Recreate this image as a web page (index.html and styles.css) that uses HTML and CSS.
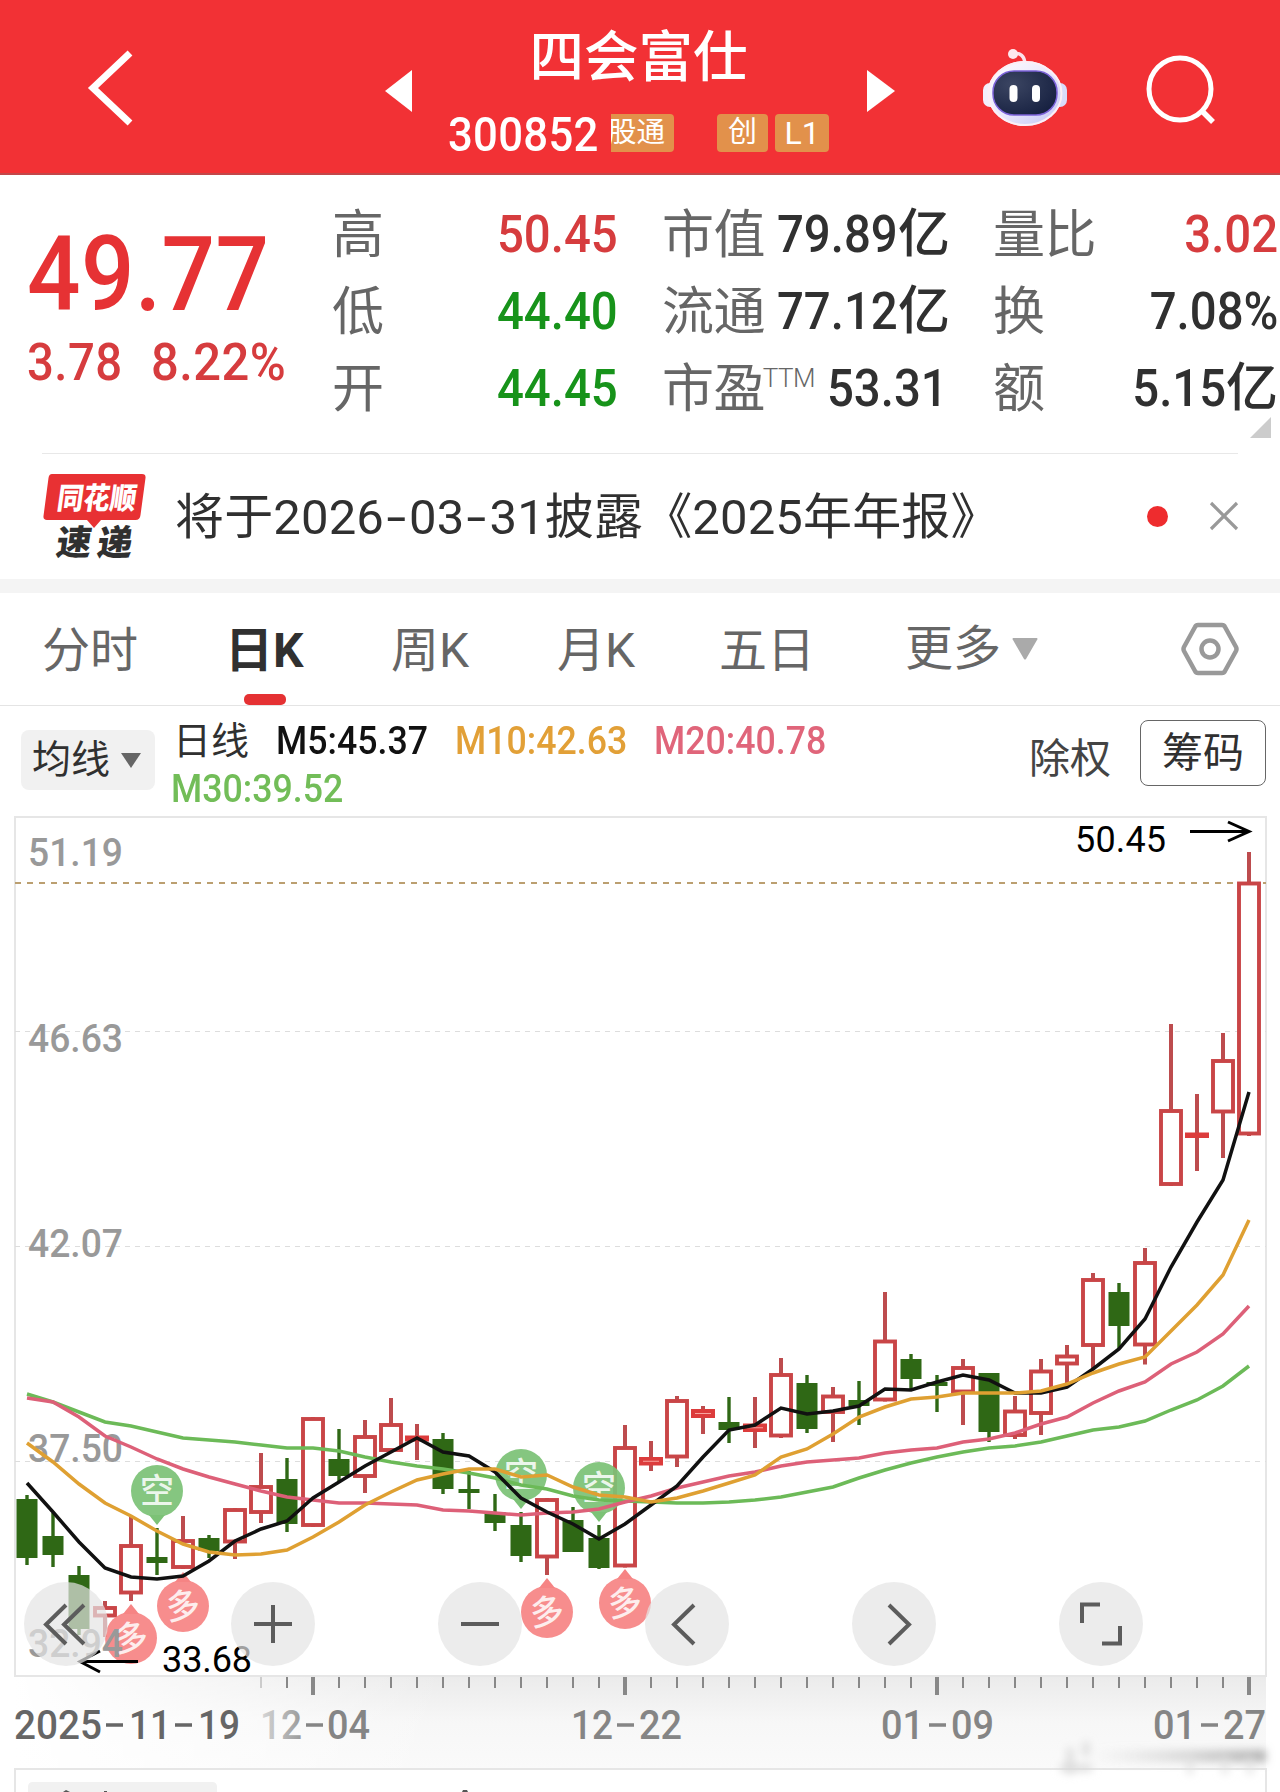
FILE: index.html
```html
<!DOCTYPE html>
<html lang="zh-CN">
<head>
<meta charset="utf-8">
<title>四会富仕 300852</title>
<link rel="stylesheet" href="styles.css">
</head>
<body>
<header class="topbar">
  <svg class="back" width="52" height="84" viewBox="0 0 52 84"><path d="M45 7 8 42l37 35" fill="none" stroke="#fff" stroke-width="7"/></svg>
  <svg class="prev" width="28" height="42" viewBox="0 0 28 42"><path d="M27 0v42L0 21z" fill="#fff"/></svg>
  <div class="stock">
    <h1>四会富仕</h1>
    <div class="code-row">
      <span class="code">300852</span>
      <span class="tag tag-cut"><b>股通</b></span>
      <span class="tag tag-c">创</span>
      <span class="tag tag-l">L1</span>
    </div>
  </div>
  <svg class="next" width="28" height="42" viewBox="0 0 28 42"><path d="M0 0v42l28-21z" fill="#fff"/></svg>
  <svg class="robot" width="86" height="80" viewBox="0 0 86 80">
    <defs>
      <linearGradient id="shell" x1="0" y1="0" x2="1" y2="1"><stop offset="0" stop-color="#fff"/><stop offset=".5" stop-color="#ece8fc"/><stop offset="1" stop-color="#bfc4f4"/></linearGradient>
      <radialGradient id="visor" cx=".3" cy=".3" r=".8"><stop offset="0" stop-color="#3b4562"/><stop offset="1" stop-color="#172141"/></radialGradient>
    </defs>
    <path d="M31 6c7-2 12 2 12 11" fill="none" stroke="#fbe3ec" stroke-width="3.5"/>
    <circle cx="31" cy="6" r="5" fill="#fde9ee"/>
    <rect x="1" y="35" width="18" height="24" rx="7" fill="#f3effc"/>
    <rect x="67" y="35" width="18" height="24" rx="7" fill="#d9dcfb"/>
    <ellipse cx="43" cy="45.500" rx="37.500" ry="32.500" fill="url(#shell)"/>
    <ellipse cx="43" cy="45.500" rx="36.500" ry="31.500" fill="none" stroke="#fceff6" stroke-width="2"/>
    <rect x="11" y="23" width="64" height="44" rx="21" fill="url(#visor)" stroke="#7b62d8" stroke-width="1.500"/>
    <rect x="27.500" y="37" width="8" height="17" rx="4" fill="#fff"/>
    <rect x="50" y="37" width="8" height="17" rx="4" fill="#fff"/>
  </svg>
  <svg class="search" width="74" height="74" viewBox="0 0 74 74"><circle cx="35" cy="36" r="31" fill="none" stroke="#fff" stroke-width="5"/><path d="m56 57 12 12" stroke="#fff" stroke-width="5.500"/></svg>
</header>

<section class="quote">
  <div class="last">
    <div class="price">49.77</div>
    <div class="change"><span>3.78</span><span>8.22%</span></div>
  </div>
  <dl class="stats s1">
    <div><dt>高</dt><dd class="up"><span class="n">50.45</span></dd></div>
    <div><dt>低</dt><dd class="down"><span class="n">44.40</span></dd></div>
    <div><dt>开</dt><dd class="down"><span class="n">44.45</span></dd></div>
  </dl>
  <dl class="stats s2">
    <div><dt>市值</dt><dd><span class="n">79.89</span>亿</dd></div>
    <div><dt>流通</dt><dd><span class="n">77.12</span>亿</dd></div>
    <div><dt>市盈<sup>TTM</sup></dt><dd class="pe"><span class="n">53.31</span></dd></div>
  </dl>
  <dl class="stats s3">
    <div><dt>量比</dt><dd class="up"><span class="n">3.02</span></dd></div>
    <div><dt>换</dt><dd><span class="n">7.08%</span></dd></div>
    <div><dt>额</dt><dd><span class="n">5.15</span>亿</dd></div>
  </dl>
  <i class="corner"></i>
</section>

<section class="news">
  <svg class="news-logo" width="106" height="88" viewBox="0 0 106 88">
    <path d="M10 3h90q4 0 3.500 4l-5 37q-.5 5-5 5H59l-7 8-7-8H5q-4 0-3.500-4l5-38q.5-4 3.500-4z" fill="#e83133"/>
    <text class="logo-a" transform="translate(14 37.500) skewX(-8)" textLength="79" lengthAdjust="spacingAndGlyphs">同花顺</text>
    <text class="logo-b" transform="translate(13 84) skewX(-8)"><tspan x="0">速</tspan><tspan x="41">递</tspan></text>
  </svg>
  <p>将于2026<i class="dash">-</i>03<i class="dash">-</i>31披露《2025年年报》</p>
  <i class="dot"></i>
  <svg class="close" width="30" height="30" viewBox="0 0 30 30"><path d="M2 2l26 26M28 2 2 28" stroke="#999" stroke-width="3.200"/></svg>
</section>

<nav class="tabs">
  <span class="t1">分时</span>
  <span class="t2 active">日K</span>
  <span class="t3">周K</span>
  <span class="t4">月K</span>
  <span class="t5">五日</span>
  <span class="t6">更多<svg width="26" height="22" viewBox="0 0 26 22"><path d="M1 0h24q1 1 0 2L14 21q-1 1-2 0L1 2Q0 1 1 0z" fill="#aaa"/></svg></span>
  <svg class="gear" width="58" height="54" viewBox="0 0 58 54"><path d="M17 3h24q2 0 3 2l11 20q1 2 0 4L44 49q-1 2-3 2H17q-2 0-3-2L3 29q-1-2 0-4L14 5q1-2 3-2z" fill="none" stroke="#999" stroke-width="4.500"/><circle cx="29" cy="27" r="8.500" fill="none" stroke="#999" stroke-width="4.500"/></svg>
</nav>

<section class="legend">
  <div class="ma-btn">均线<svg width="20" height="15" viewBox="0 0 20 15"><path d="M0 0h20L10 15z" fill="#666"/></svg></div>
  <div class="ma">
    <span class="name">日线</span><span class="m5">M5:45.37</span><span class="m10">M10:42.63</span><span class="m20">M20:40.78</span>
    <span class="m30">M30:39.52</span>
  </div>
  <span class="adjust">除权</span>
  <span class="chips">筹码</span>
</section>

<main class="chart">
  <svg id="kline" width="1280" height="986" viewBox="0 806 1280 986">
    <defs>
      <linearGradient id="axisV" x1="0" y1="0" x2="0" y2="1"><stop offset="0" stop-color="#ebebeb"/><stop offset=".5" stop-color="#f7f7f7"/><stop offset="1" stop-color="#fafafa"/></linearGradient>
      <linearGradient id="fadeL" x1="0" y1="0" x2="1" y2="0"><stop offset="0" stop-color="#fff"/><stop offset="1" stop-color="#fff" stop-opacity="0"/></linearGradient>
      <linearGradient id="dateFade" gradientUnits="userSpaceOnUse" x1="262" y1="0" x2="312" y2="0"><stop offset="0" stop-color="#d4d4d4"/><stop offset="1" stop-color="#8c8c8c"/></linearGradient>
      <linearGradient id="smear" x1="0" y1="0" x2="1" y2="0"><stop offset="0" stop-color="#bbb" stop-opacity="0"/><stop offset="1" stop-color="#999" stop-opacity=".75"/></linearGradient>
      <filter id="soft" x="-20%" y="-60%" width="140%" height="220%"><feGaussianBlur stdDeviation="4"/></filter>
    </defs>
    <rect x="15" y="1677" width="1251" height="92" fill="url(#axisV)"/>
    <rect x="15" y="1677" width="430" height="92" fill="url(#fadeL)"/>
    <g class="frame">
      <rect x="15" y="817" width="1251" height="859"/>
      <path d="M15 1792V1769H1266V1792"/>
    </g>
    <g class="grid"><path d="M15 1031.500H1266M15 1246.500H1266M15 1461.500H1266"/></g>
    <path class="last-line" d="M15 883H1266"/>
    <g id="candles"></g>
    <g id="markers"></g>
    <g class="ylab">
      <text x="28" y="866" textLength="95" lengthAdjust="spacingAndGlyphs">51.19</text>
      <text x="28" y="1052" textLength="95" lengthAdjust="spacingAndGlyphs">46.63</text>
      <text x="28" y="1257" textLength="95" lengthAdjust="spacingAndGlyphs">42.07</text>
      <text x="28" y="1462" textLength="95" lengthAdjust="spacingAndGlyphs">37.50</text>
      <text x="28" y="1657" textLength="95" lengthAdjust="spacingAndGlyphs">32.94</text>
    </g>
    <g id="lines"></g>
    <g class="extreme">
      <text x="1075" y="852" textLength="91">50.45</text>
      <path d="M1190 831.500h58M1228 822l21 9.500-21 9.500"/>
      <text x="162" y="1672" textLength="90">33.68</text>
      <path d="M138 1661.500H81M100 1651l-20 10.500 20 10.500"/>
    </g>
    <g id="ticks"></g>
    <g class="xlab">
      <text class="first" x="14" y="1739" textLength="88" lengthAdjust="spacingAndGlyphs">2025</text><path class="first" d="M106 1725h17M175 1725h17"/><text class="first" x="129" y="1739" textLength="42" lengthAdjust="spacingAndGlyphs">11</text><text class="first" x="198" y="1739" textLength="42" lengthAdjust="spacingAndGlyphs">19</text>
      <text x="260" y="1739" textLength="42" lengthAdjust="spacingAndGlyphs" fill="url(#dateFade)">12</text><path d="M306 1725h17"/><text x="327" y="1739" textLength="43" lengthAdjust="spacingAndGlyphs">04</text>
      <text x="571" y="1739" textLength="42" lengthAdjust="spacingAndGlyphs">12</text><path d="M617 1725h17"/><text x="639" y="1739" textLength="43" lengthAdjust="spacingAndGlyphs">22</text>
      <text x="881" y="1739" textLength="43" lengthAdjust="spacingAndGlyphs">01</text><path d="M929 1725h17"/><text x="951" y="1739" textLength="43" lengthAdjust="spacingAndGlyphs">09</text>
      <text x="1153" y="1739" textLength="43" lengthAdjust="spacingAndGlyphs">01</text><path d="M1201 1725h17"/><text x="1223" y="1739" textLength="43" lengthAdjust="spacingAndGlyphs">27</text>
    </g>
    <g filter="url(#soft)">
      <rect x="1090" y="1750" width="176" height="12" fill="url(#smear)"/>
      <path d="M1060 1768h32M1070 1774V1748M1086 1742v14" stroke="#d8d8d8" stroke-width="6" fill="none"/>
      <path d="M1190 1758v16M1225 1758v16M1250 1758v16" stroke="#e2e2e2" stroke-width="6" fill="none"/>
    </g>
    <path d="M28 1792v-5q0-5 5-5H212q5 0 5 5v5z" fill="#f1f1f1"/>
    <path d="M63 1792l3-2 4 2zM104 1792v-1h3v1zM462 1792l1-2h4l1 2z" fill="#555"/>
  </svg>
  <div class="controls">
    <button><svg viewBox="0 0 84 84"><path d="M42 23 22 42.500 42 62M60 23 40 42.500 60 62"/></svg></button>
    <button><svg viewBox="0 0 84 84"><path d="M42 23v38M23 42h38"/></svg></button>
    <button><svg viewBox="0 0 84 84"><path d="M23 42h38"/></svg></button>
    <button><svg viewBox="0 0 84 84"><path d="M49 23 29 42.500 49 62"/></svg></button>
    <button><svg viewBox="0 0 84 84"><path d="M37 23 57 42.500 37 62"/></svg></button>
    <button><svg viewBox="0 0 84 84"><path d="M23 41V22.500h18M61 44v17.500H43"/></svg></button>
  </div>
</main>
<script src="chart.js"></script>
</body>
</html>
```
FILE: styles.css
```css
* { box-sizing: border-box; }
body {
  margin: 0;
  width: 1280px;
  height: 1792px;
  overflow: hidden;
  background: #fff;
  color: #303030;
  font-family: Roboto, "Noto Sans CJK SC", sans-serif;
}
i { font-style: normal; }
svg { display: block; flex: none; }

.topbar {
  height: 175px;
  background: #f23135;
  border-bottom: 2px solid #c2474a;
  display: flex;
  align-items: flex-start;
  color: #fff;
}
.back { margin: 46px 0 0 85px; }
.prev { margin: 70px 0 0 248px; }
.stock { width: 454px; display: flex; flex-direction: column; }
.stock h1 {
  margin: 15px 3px 0 0;
  text-align: center;
  font: 500 54.5px/76px "Noto Sans CJK SC", sans-serif;
}
.code-row { display: flex; align-items: center; height: 38px; margin: 23px 0 0 35px; }
.code { width: 163px; padding-top: 3px; font-size: 48px; font-weight: 500; line-height: 38px; letter-spacing: .3px; white-space: nowrap; transform: scaleX(.91); transform-origin: left; }
.tag {
  height: 38px;
  border-radius: 4px;
  background: #e2914b;
  font-size: 29px;
  line-height: 37px;
  text-align: center;
  flex: none;
}
.tag-cut { width: 63px; overflow: hidden; display: flex; justify-content: flex-end; padding-right: 9px; border-radius: 0 4px 4px 0; font-size: 28.5px; white-space: nowrap; }
.tag-cut b { font-weight: 400; flex: none; }
.tag-c { width: 51px; margin-left: 43px; }
.tag-l { width: 54px; margin-left: 7px; font-size: 32px; line-height: 38px; }
.next { margin: 70px 0 0 0; }
.robot { margin: 48px 0 0 87px; }
.search { margin: 53px 0 0 77px; }

.quote { height: 278px; display: flex; position: relative; }
.last { width: 332px; padding-left: 27px; color: #e63234; font-weight: 500; }
.price { font-size: 104px; line-height: 104px; letter-spacing: .5px; margin-top: 48px; transform: scaleX(.905); transform-origin: left; }
.change { display: flex; font-size: 52px; line-height: 60px; margin-top: 6px; color: #d63c3e; }
.change span { width: 124px; transform: scaleX(.91); transform-origin: left; white-space: nowrap; letter-spacing: .5px; }
.change span + span { transform: scaleX(.94); }
.stats { margin: 19px 0 0; }
.stats > div { display: flex; justify-content: space-between; height: 77px; line-height: 75px; white-space: nowrap; }
.stats dt { font-size: 52px; font-weight: 400; line-height: 74px; color: #666; font-family: "Noto Sans CJK SC", sans-serif; letter-spacing: -.6px; }
.stats dd { margin: 3px 0 0; font-size: 52px; font-weight: 500; }
.stats .n { display: inline-block; transform: scaleX(.91); transform-origin: right; }
.stats dd.up { color: #d63c3e; }
.stats dd.down { color: #17931a; }
.stats sup { font: 300 26px/1 Roboto, sans-serif; vertical-align: 20px; margin-left: -2px; letter-spacing: -.5px; }
.stats .pe { padding-right: 2px; margin-left: -20px; }
.s1 { width: 286px; }
.s2 { width: 288px; margin-left: 44px; }
.s3 { width: 286px; margin-left: 43px; }
.s3 dd { padding-right: 1px; }
.corner { position: absolute; right: 9px; bottom: 15px; border-left: 21px solid transparent; border-bottom: 21px solid #ccc; }

.news {
  height: 140px;
  display: flex;
  align-items: center;
  position: relative;
  border-bottom: 14px solid #f4f4f4;
  background: linear-gradient(#e8e8e8, #e8e8e8) 42px 0 / 1196px 1px no-repeat;
}
.news-logo { margin: 0 0 2px 42px; }
.logo-a { font: 900 30px "Noto Sans CJK SC", sans-serif; fill: #fff; }
.logo-b { font: 900 35px "Noto Sans CJK SC", sans-serif; fill: #303030; }
.news p { margin: 4px 0 0 27px; width: 972px; font-size: 49px; line-height: 122px; letter-spacing: .15px; white-space: nowrap; }
.dash { display: inline-block; width: 25px; text-align: center; transform: scaleX(1.45); }
.dot { width: 21px; height: 21px; border-radius: 50%; background: #ee2c2e; }
.close { margin-left: 41px; }

.tabs { height: 113px; border-bottom: 1px solid #e4e4e4; display: flex; align-items: center; font-size: 48px; font-weight: 400; color: #666; white-space: nowrap; }
.tabs > span { height: 112px; line-height: 116px; flex: none; }
.t1 { margin-left: 42px; width: 183px; }
.t2 { width: 166px; }
.t3 { width: 166px; }
.t4 { width: 162px; }
.t5 { width: 186px; }
.t6 { width: 276px; display: flex; align-items: center; gap: 11px; }
.active { position: relative; color: #303030; font-weight: 700; }
.active::after { content: ""; position: absolute; left: 19px; bottom: 0; width: 42px; height: 11px; border-radius: 5px; background: #e53133; }

.legend { height: 100px; display: flex; align-items: flex-start; }
.ma-btn { margin: 24px 0 0 21px; width: 134px; height: 60px; border-radius: 8px; background: #f1f1f1; display: flex; align-items: center; gap: 11px; padding-left: 11px; font-size: 39px; line-height: 64px; }
.ma { margin: 11px 0 0 17px; width: 857px; height: 92px; font-size: 39px; font-weight: 500; line-height: 48px; display: flex; flex-wrap: wrap; align-content: flex-start; }
.ma span { white-space: nowrap; transform: scaleX(.915); transform-origin: left; }
.ma span.name { width: 104px; font-size: 38px; font-weight: 400; padding-left: 1px; line-height: 48px; transform: none; }
.m5 { width: 179px; color: #111; }
.m10 { width: 199px; color: #e2a037; }
.m20 { width: 350px; color: #e0657a; }
.m30 { color: #72bd58; margin-left: -1px; }
.adjust { margin-top: 22px; width: 111px; font-size: 41px; line-height: 62px; color: #444; }
.chips { margin-top: 14px; width: 126px; height: 66px; border: 1.5px solid #666; border-radius: 8px; text-align: center; font-size: 41px; line-height: 64px; }

.chart { position: relative; }
.frame { fill: none; stroke: #e6e6e6; stroke-width: 2; }
.grid { stroke: #ddd; stroke-width: 1.2; stroke-dasharray: 5 5; }
.last-line { stroke: #bb9f70; stroke-width: 1.8; stroke-dasharray: 6 6; }
.ylab { font-size: 39.5px; font-weight: 500; fill: #999; }
.extreme { font-size: 36px; fill: #000; }
.extreme path { fill: none; stroke: #000; stroke-width: 3; }
.xlab { font-size: 41px; font-weight: 500; fill: #858585; }
.xlab path { stroke: #858585; stroke-width: 3.5; }
.xlab text.first { fill: #666; }
.xlab path.first { stroke: #666; }
.marker-text { font: 500 34px "Noto Sans CJK SC", sans-serif; fill: #fff; fill-opacity: .85; text-anchor: middle; }
.controls { position: absolute; left: 24px; top: 776px; display: flex; gap: 123px; }
.controls button { width: 84px; height: 84px; padding: 0; border: 0; border-radius: 50%; background: rgba(228, 228, 228, .7); }
.controls path { fill: none; stroke: #5c5c5c; stroke-width: 4; }
```
FILE: chart.js
```js
// Columns: rising?, high, body top, body bottom, low (y in chart units).
const candles = [
  [0,1495,1499,1558,1565],[0,1513,1536,1555,1567],[0,1566,1575,1629,1635],[1,1601,1606,1617.5,1637],
  [1,1517,1544,1594.5,1601],[0,1528,1557,1563,1575],[1,1516,1539,1569,1569],[0,1535,1538,1551,1558],
  [1,1508,1508,1543.5,1559],[1,1453,1485,1514,1523],[0,1458,1479,1524,1532],[1,1417,1417,1527,1527],
  [0,1429,1459,1476,1483],[1,1420,1435,1478,1493],[1,1398,1423,1452,1452],[1,1424,1435.5,1441.5,1460],
  [0,1433,1439,1489,1494],[0,1471,1489,1493,1509],[0,1494,1512,1523,1531],[0,1512,1525,1556,1562],
  [1,1498,1498,1558.5,1575],[0,1507,1520,1552,1552],[0,1525,1538,1568,1569],[1,1425,1446,1567.5,1567.5],
  [1,1441,1457,1465.5,1471],[1,1396,1399,1458.5,1467],[1,1406,1409,1418,1434],[0,1397,1422,1430,1443],
  [1,1397,1423.5,1432,1448],[1,1358,1373,1437.5,1438],[0,1375,1383,1429,1433],[1,1387,1394.5,1414,1442],
  [0,1381,1400,1406,1425],[1,1292,1339.5,1401.5,1401.5],[0,1354,1359,1379,1389],[0,1375,1382,1386,1412],
  [1,1359,1366,1393.5,1425],[0,1373,1373,1432,1442],[1,1396,1409.5,1437,1439],[1,1359,1369.5,1415,1435],
  [1,1345,1354.5,1365.5,1385],[1,1273,1278,1347,1369],[0,1283,1292,1326,1349],[1,1248,1261,1346.5,1364.5],
  [1,1024,1109,1186,1186],[1,1094,1132.5,1138,1171],[1,1033,1059,1113.5,1158],[1,852,881.5,1135.5,1136]
];
const averages = {
  '#6cba58': [1394,1402,1412,1422,1426,1432,1438,1440,1442,1445,1448,1448,1451,1457,1462,1466,1469,1473,1478,1485,1489,1496,1500,1501,1502,1503,1503,1502,1500,1497,1492,1487,1478,1470,1463,1457,1452,1448,1446,1442,1436,1430,1427,1421,1410,1400,1386,1366],
  '#dd6078': [1398,1402,1417,1436,1447,1459,1469,1477,1484,1491,1497,1500,1503,1503,1504,1505,1510,1511,1513,1515,1513,1512,1509,1502,1496,1488,1482,1476,1472,1466,1462,1460,1458,1453,1450,1448,1442,1439,1433,1424,1417,1403,1391,1382,1364,1352,1334,1306],
  '#111': [1483,1512,1542,1568,1577,1579,1576,1561,1541,1529,1521,1498,1482,1466,1452,1438,1452,1456,1472,1498,1512,1524,1539,1524,1505,1486,1457,1430,1425,1408,1414,1411,1406,1389,1390,1382,1375,1380,1393,1393,1387,1369,1349,1319,1267,1222,1180,1092],
  '#dfa032': [1443,1462,1484,1503,1516,1531,1544,1552,1555,1554,1550,1537,1522,1505,1492,1480,1474,1469,1469,1477,1475,1487,1495,1497,1502,1498,1491,1483,1475,1457,1449,1434,1417,1407,1399,1397,1393,1393,1393,1391,1384,1373,1364,1357,1331,1305,1275,1220]
};
// Signals: x, circle centre y, bearish?
const signals = [[157,1491,1],[521,1475,1],[599,1488,1],[131,1638,0],[183,1606,0],[547,1612,0],[625,1603,0]];
const X = i => 27 + 26 * i;
const put = (id, html) => { document.getElementById(id).innerHTML = html; };

put('candles', candles.map(([up, hi, top, bottom, lo], i) => {
  const x = X(i);
  const h = bottom - top;
  if (!up) {
    return `<path d="M${x} ${hi}V${lo}" stroke="#2f6815" stroke-width="3.4"/><rect x="${x - 10.5}" y="${top}" width="21" height="${h}" fill="#2f6815"/>`;
  }
  const wick = `<path d="M${x} ${hi}V${top + 1}M${x} ${bottom - 1}V${lo}" stroke="#bd4c4e" stroke-width="4"/>`;
  let body;
  if (h < 8) {
    body = `<rect x="${x - 12}" y="${top}" width="24" height="${h}" fill="#dc3c3c"/>`;
  } else if (h < 9.5) {
    body = `<rect x="${x - 12}" y="${top}" width="24" height="${h}" fill="#dc3c3c"/><path d="M${x - 8} ${top + h / 2}h16" stroke="#f7a5a0" stroke-width="1"/>`;
  } else {
    body = `<rect x="${x - 10}" y="${top + 2}" width="20" height="${h - 4}" fill="#fff" stroke="#c94547" stroke-width="3.9"/>`;
  }
  return wick + body;
}).join(''));

put('markers', signals.map(([x, y, bear]) => {
  const s = bear ? 1 : -1;
  const d = `M${x} ${y + s * 34}L${x - 8} ${y + s * 24}H${x + 8}Z`;
  const fill = bear ? '#7cc276' : '#f68484';
  return `<g><circle cx="${x}" cy="${y}" r="26" fill="${fill}" fill-opacity=".93"/><path d="${d}" fill="${fill}"/>` +
    `<text class="marker-text" x="${x}" y="${y + 12}"${bear ? '' : ` transform="rotate(-8 ${x} ${y})"`}>${bear ? '空' : '多'}</text></g>`;
}).join(''));

put('lines', Object.entries(averages).map(([color, ys]) =>
  `<polyline points="${ys.map((y, i) => X(i) + ',' + y).join(' ')}" fill="none" stroke="${color}" stroke-width="3.5"/>`
).join(''));

let ticks = '';
for (let i = 9; i < 48; i++) {
  const major = (i - 11) % 12 === 0;
  ticks += `<path d="M${X(i)} 1677V${major ? 1695 : 1688}" stroke="${i === 9 ? '#ccc' : '#888'}" stroke-width="${major ? 4 : 2}"/>`;
}
put('ticks', ticks);
```
